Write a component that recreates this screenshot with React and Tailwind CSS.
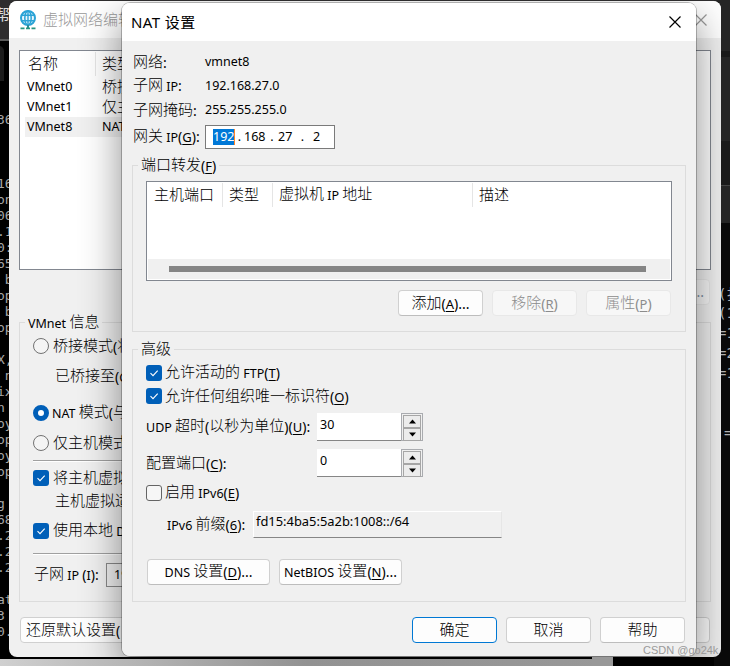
import React from "react";

const CJK = "[\\u4e00-\\u9fff]+";

// Splits a label into Chinese, Latin and punctuation runs; "&" marks the mnemonic letter.
function Label({ text, className = "" }) {
  const runs = text.match(new RegExp(`${CJK}|&.|\\.\\.\\.|[():]+|[^&():\\u4e00-\\u9fff]+`, "g")) || [];
  return (
    <span className={`whitespace-pre inline-flex items-baseline leading-[20px] ${className}`}>
      {runs.map((r, i) => {
        if (new RegExp(CJK).test(r))
          return (
            <span key={i} className="text-[15px] font-light relative -top-px">
              {r}
            </span>
          );
        if (r[0] === "&")
          return (
            <span key={i} className="text-[13px] underline underline-offset-2">
              {r[1]}
            </span>
          );
        if (r === "..." || /^[():]+$/.test(r))
          return (
            <span key={i} className="text-[14px]">
              {r}
            </span>
          );
        return (
          <span key={i} className="text-[12.5px]">
            {r}
          </span>
        );
      })}
    </span>
  );
}

function Button({ text, className = "w-[85px]", primary, disabled }) {
  const tone = primary
    ? "border-[#0078d4] bg-[#fdfdfd]"
    : disabled
      ? "border-[#e8e8e8] bg-[#f7f7f7] text-[#8c8c8c]"
      : "border-[#d0d0d0] border-b-[#bdbdbd] bg-[#fdfdfd]";
  return (
    <div className={`h-[26px] shrink-0 rounded-[4px] border flex items-center justify-center ${tone} ${className}`}>
      <Label text={text} />
    </div>
  );
}

function Check({ on }) {
  return on ? (
    <span className="size-4 shrink-0 rounded-[3px] bg-[#005fb8] flex items-center justify-center">
      <svg width="10" height="10" viewBox="0 0 10 10" fill="none" stroke="#fff" strokeWidth="1.1">
        <path d="M1.5 5.2 4 7.6 8.7 2.6" />
      </svg>
    </span>
  ) : (
    <span className="size-4 shrink-0 rounded-[3px] border border-[#646464] bg-[#f6f6f6]" />
  );
}

function Radio({ on }) {
  return on ? (
    <span className="size-4 shrink-0 rounded-full border-[5px] border-[#005fb8] bg-white" />
  ) : (
    <span className="size-4 shrink-0 rounded-full border border-[#727272] bg-[#f4f4f4]" />
  );
}

function Group({ title, className = "", children }) {
  return (
    <fieldset className={`border border-[#dcdcdc] min-w-0 ${className}`}>
      <legend className="ml-[5px] px-[3px] h-5 leading-5 flex">
        <Label text={title} />
      </legend>
      {children}
    </fieldset>
  );
}

function Spin({ value }) {
  return (
    <div className="flex w-[106px] h-7">
      <div className="flex-1 bg-white border-b border-[#868686] px-[3px] text-[12.5px] leading-[23px]">{value}</div>
      <div className="w-[22px] border border-[#a9abaf] bg-[#f0f0f0] p-px flex flex-col">
        {["M4 7.5 7.5 3.5 11 7.5Z", "M4 3.5 7.5 7.5 11 3.5Z"].map((d) => (
          <div key={d} className="flex-1 border border-[#a6a6a6] bg-[#ececec] flex items-center justify-center">
            <svg width="15" height="11" viewBox="0 0 15 11">
              <path d={d} fill="#000" />
            </svg>
          </div>
        ))}
      </div>
    </div>
  );
}

function Close({ color }) {
  return (
    <svg width="12" height="12" viewBox="0 0 12 12" stroke={color} strokeWidth="1.2">
      <path d="M.5.5l11 11M11.5.5l-11 11" />
    </svg>
  );
}

function Globe() {
  return (
    <svg width="18" height="20" viewBox="0 0 18 20" fill="none">
      <circle cx="9" cy="8" r="7" fill="#eaf6fb" stroke="#2ba3d6" strokeWidth="2" />
      <ellipse cx="9" cy="8" rx="3.2" ry="7" stroke="#2ba3d6" strokeWidth="1.5" />
      <path d="M9 1v14M2.500 5.300h13M2.500 10.700h13" stroke="#2ba3d6" strokeWidth="1.4" />
      <path d="M9 15v3" stroke="#2b8c9b" strokeWidth="2" />
      <path d="M1.500 18.300h4M7 18.300h4M12.500 18.300h4" stroke="#27957f" strokeWidth="1.8" />
    </svg>
  );
}

const leftScraps = [
  [112, "36"], [176, "16"], [192, "on"], [208, "06"], [224, ".1"], [240, "0:"], [256, "65"], [272, " b"],
  [288, "op"], [304, " b"], [320, "op"], [352, "X,"], [368, " n"], [384, "ix"], [400, "n"], [416, "oy"],
  [432, "op"], [448, "oy"], [464, "op"], [496, "g"], [512, "68"], [528, ".2"], [544, ".2"], [560, ".2"],
  [592, "at"], [608, "3"], [624, "0."],
];
const rightScraps = [[286, "(扌"], [305, "(1"], [325, "=1"], [345, "=2"], [365, "=1"]];

function Terminal() {
  return (
    <div className="absolute inset-0 bg-black">
      <div className="absolute inset-x-0 top-0 h-[41px] bg-[#2e2d2e] border-b-2 border-[#5a5a5a]" />
      <div className="absolute right-0 top-0 w-4 h-[223px] bg-[#252525]" />
      <div className="absolute right-0 top-[51px] w-4 h-[6px] bg-[#191919]" />
      <div className="absolute right-0 top-[141px] w-4 h-[45px] bg-[#1a1a1a] border-b border-[#444]" />
      <div className="absolute right-0 top-[223px] w-4 bottom-0 bg-[#090909]" />
      <div className="absolute left-[-10px] top-[46px] w-[14px] h-[35px] rounded-tr-[5px] bg-[#1c1c1c]" />
      <span className="absolute left-[-5px] top-[6px] text-[15px] leading-4 text-[#ddd]">帮</span>
      {leftScraps.map(([y, t]) => (
        <span
          key={y}
          className="absolute left-[-3px] whitespace-pre leading-4 text-[13px] text-[#a8a8a8] font-['DejaVu_Sans_Mono','Noto_Sans_CJK_SC',monospace]"
          style={{ top: y }}
        >
          {t}
        </span>
      ))}
      {rightScraps.map(([y, t]) => (
        <span
          key={y}
          className="absolute left-[718px] whitespace-pre leading-4 text-[14px] text-[#b0b0b0] font-['DejaVu_Sans_Mono','Noto_Sans_CJK_SC',monospace]"
          style={{ top: y }}
        >
          {t}
        </span>
      ))}
      <span className="absolute left-[724px] top-[425px] leading-4 text-[14px] text-[#b0b0b0] font-['DejaVu_Sans_Mono',monospace]">=</span>
      <div className="absolute left-0 top-[659px] w-[613px] h-[7px] bg-linear-to-r from-[#d0d0d0] via-[#929292] to-[#989898]" />
      <div className="absolute left-[592px] top-[657px] w-[21px] h-[9px] bg-[#989898]" />
    </div>
  );
}

function EditorWindow() {
  const col = "w-[75px] shrink-0";
  return (
    <div className="absolute left-[9px] top-px w-[712px] h-[656px] rounded-[8px] bg-[#f0f0f0] overflow-hidden flex flex-col">
      <div className="h-[37px] bg-white flex items-center pl-[10px] pr-[14px] shrink-0">
        <Globe />
        <span className="ml-[6px] text-[15px] font-light text-[#999] whitespace-nowrap flex-1">虚拟网络编辑</span>
        <Close color="#999" />
      </div>
      <div className="mt-3 mx-[10px] h-[220px] shrink-0 border border-[#828790] bg-white p-px">
        <div className="flex h-6 items-center pl-[6px]">
          <div className={`${col} h-full flex items-center`}>
            <Label text="名称" className="w-[68px] pl-px" />
            <span className="w-px h-full bg-[#e5e5e5]" />
          </div>
          <Label text="类型" />
        </div>
        <div className="mt-px">
          {[["VMnet0", "桥接"], ["VMnet1", "仅主"], ["VMnet8", "NAT"]].map(([n, t], i) => (
            <div key={n} className={`h-5 ml-[4px] mr-[24px] pl-[2px] flex items-center ${i === 2 ? "bg-[#f0f0f0]" : ""}`}>
              <Label text={n} className={col} />
              <Label text={t} />
            </div>
          ))}
        </div>
      </div>
      <div className="h-[42px] pt-[9px] pr-[11px] flex justify-end shrink-0">
        <div className="w-[80px] h-[26px] rounded-[4px] border border-[#e8e8e8] bg-[#f7f7f7] text-[#7d8fa3] flex items-center justify-end pr-[5px]">
          <Label text="..." />
        </div>
      </div>
      <Group title="VMnet 信息" className="mx-[10px] h-[290px] shrink-0">
        <div className="pl-[13px] pr-[20px] flex flex-col">
          <div className="mt-[4px] h-5 flex items-center gap-1"><Radio /><Label text="桥接模式(将" /></div>
          <div className="mt-[11px] h-5 pl-[22px] flex items-center"><Label text="已桥接至(G" /></div>
          <div className="mt-[16px] h-5 flex items-center gap-[3px]"><Radio on /><Label text="NAT 模式(与" /></div>
          <div className="mt-[10px] h-5 flex items-center gap-1"><Radio /><Label text="仅主机模式" /></div>
          <div className="mt-[7px] h-[2px] border-t border-[#a0a0a0] bg-white" />
          <div className="mt-[6px] h-5 flex items-center gap-1"><Check on /><Label text="将主机虚拟" /></div>
          <div className="mt-[3px] h-5 pl-[22px] flex items-center"><Label text="主机虚拟适" /></div>
          <div className="mt-[10px] h-5 flex items-center gap-1"><Check on /><Label text="使用本地 D" /></div>
          <div className="mt-[12px] h-[2px] border-t border-[#a0a0a0] bg-white" />
          <div className="mt-[8px] h-6 flex items-center">
            <Label text="子网 IP (I):" className="w-[73px] pl-px" />
            <div className="w-[130px] h-6 border border-[#8a8a8a] bg-[#f0f0f0] flex items-center px-[7px]"><Label text="19" /></div>
          </div>
        </div>
      </Group>
      <div className="mt-[15px] mx-[11px] flex justify-between shrink-0">
        <div className="w-[118px] h-[26px] rounded-[4px] border border-[#d0d0d0] bg-[#fdfdfd] pl-[5px] flex items-center">
          <Label text="还原默认设置(" />
        </div>
        <div className="w-[85px] h-[26px] rounded-[4px] border border-[#d0d0d0] bg-[#fdfdfd]" />
      </div>
    </div>
  );
}

function NatDialog() {
  return (
    <div className="absolute left-[122px] top-[3px] w-[574px] h-[653px] rounded-[8px] bg-[#f0f0f0] overflow-hidden flex flex-col">
      <div className="h-[38px] shrink-0 bg-white flex items-center pl-[9px] pr-[15px]">
        <span className="flex-1 text-[15px] tracking-[0.4px] whitespace-pre">NAT 设置</span>
        <Close color="#000" />
      </div>
      <div className="pt-[9px] pl-[11px] flex flex-col shrink-0">
        {[["网络:", "vmnet8"], ["子网 IP:", "192.168.27.0"], ["子网掩码:", "255.255.255.0"]].map(([k, v]) => (
          <div key={k} className="h-6 flex items-center">
            <Label text={k} className="w-[72px]" />
            <Label text={v} />
          </div>
        ))}
        <div className="mt-[3px] h-6 flex items-center">
          <Label text="网关 IP(&G):" className="w-[72px]" />
          <div className="w-[130px] h-6 border border-[#7a7a7a] bg-white flex items-center pl-[7px] text-[12.5px] leading-[16px]">
            <span className="w-[21px] h-4 bg-[#0078d7] text-white">192</span>
            <span className="w-px h-4 bg-[#ff8728]" />
            <span className="w-[9px] text-center">.</span>
            <span className="w-[22px]">168</span>
            <span className="w-[12px] text-center">.</span>
            <span className="w-[14px]">27</span>
            <span className="w-[21px] text-center">.</span>
            <span>2</span>
          </div>
        </div>
      </div>
      <Group title="端口转发(&F)" className="mt-[6px] mx-[10px] h-[177px] shrink-0">
        <div className="mt-[6px] mx-[13px] h-[100px] border border-[#828790] bg-white p-px flex flex-col">
          <div className="h-6 flex items-center">
            <Label text="主机端口" className="w-[74px] pl-[6px]" />
            <span className="w-px h-full bg-[#e5e5e5]" />
            <Label text="类型" className="w-[49px] pl-[6px]" />
            <span className="w-px h-full bg-[#e5e5e5]" />
            <Label text="虚拟机 IP 地址" className="w-[199px] pl-[6px]" />
            <span className="w-px h-full bg-[#e5e5e5]" />
            <Label text="描述" className="pl-[6px]" />
          </div>
          <div className="mt-auto h-5 bg-[#f0f0f0] pl-[21px] flex items-center">
            <div className="w-[477px] h-[6px] bg-[#858585]" />
          </div>
        </div>
        <div className="mt-[9px] mr-[14px] flex justify-end gap-[9px]">
          <Button text="添加(&A)..." />
          <Button text="移除(&R)" disabled />
          <Button text="属性(&P)" disabled />
        </div>
      </Group>
      <Group title="高级" className="mt-[7px] mx-[10px] h-[263px] shrink-0">
        <div className="pl-[13px] pt-1 flex flex-col">
          <div className="h-5 flex items-center gap-[3px]"><Check on /><Label text="允许活动的 FTP(&T)" /></div>
          <div className="mt-[3px] h-5 flex items-center gap-[3px]"><Check on /><Label text="允许任何组织唯一标识符(&O)" /></div>
          <div className="mt-[7px] h-7 flex items-center">
            <Label text="UDP 超时(以秒为单位)(&U):" className="w-[171px]" />
            <Spin value="30" />
          </div>
          <div className="mt-2 h-7 flex items-center">
            <Label text="配置端口(&C):" className="w-[171px]" />
            <Spin value="0" />
          </div>
          <div className="mt-[6px] h-5 flex items-center gap-[3px]"><Check /><Label text="启用 IPv6(&E)" /></div>
          <div className="mt-2 h-[27px] pl-[21px] flex items-center">
            <Label text="IPv6 前缀(&6):" className="w-[86px]" />
            <div className="w-[249px] h-[27px] border border-[#e6e6e6] border-l-white border-t-white border-b-[#868686] px-[2px] text-[12.9px] leading-[19px]">
              fd15:4ba5:5a2b:1008::/64
            </div>
          </div>
          <div className="mt-[21px] pl-px flex gap-[9px]">
            <Button text="DNS 设置(&D)..." className="w-[123px]" />
            <Button text="NetBIOS 设置(&N)..." className="w-[123px]" />
          </div>
        </div>
      </Group>
      <div className="mt-[15px] mr-[11px] flex justify-end gap-[9px] shrink-0">
        <Button text="确定" primary />
        <Button text="取消" />
        <Button text="帮助" />
      </div>
    </div>
  );
}

export default function App() {
  return (
    <div className="relative w-[730px] h-[666px] overflow-hidden text-black font-['Noto_Sans','Noto_Sans_CJK_SC',sans-serif]">
      <Terminal />
      <EditorWindow />
      <div className="absolute left-[9px] top-px w-[712px] h-[656px] rounded-[8px] overflow-hidden">
        <div className="absolute left-[113px] top-[2px] w-[574px] h-[653px] rounded-[8px] shadow-[0_16px_40px_rgba(0,0,0,0.46),0_0_0_1px_rgba(0,0,0,0.24)]" />
      </div>
      <NatDialog />
      <span className="absolute left-[643px] top-[643px] text-[11px] leading-[14px] text-[#999] whitespace-nowrap font-['Liberation_Sans',sans-serif]">
        CSDN @go24k
      </span>
    </div>
  );
}
